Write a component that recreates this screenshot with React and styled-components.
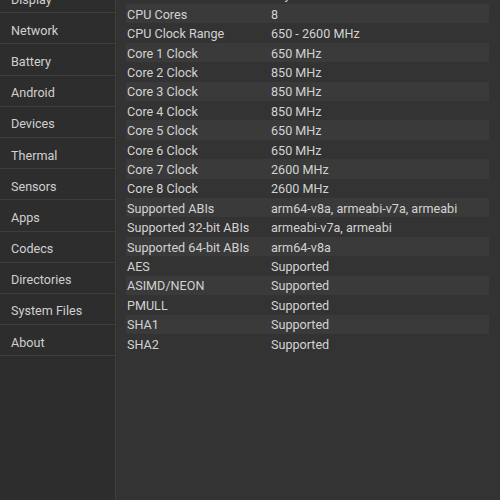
import React from "react";
import styled, { createGlobalStyle } from "styled-components";

const GlobalStyle = createGlobalStyle`
  html, body {
    margin: 0;
    padding: 0;
    background: #333333;
  }
  body {
    font-family: Roboto, "Noto Sans", sans-serif;
  }
`;

const menu = [
  "Display",
  "Network",
  "Battery",
  "Android",
  "Devices",
  "Thermal",
  "Sensors",
  "Apps",
  "Codecs",
  "Directories",
  "System Files",
  "About",
];

const rows = [
  ["Model", "Exynos 990"],
  ["CPU Cores", "8"],
  ["CPU Clock Range", "650 - 2600 MHz"],
  ["Core 1 Clock", "650 MHz"],
  ["Core 2 Clock", "850 MHz"],
  ["Core 3 Clock", "850 MHz"],
  ["Core 4 Clock", "850 MHz"],
  ["Core 5 Clock", "650 MHz"],
  ["Core 6 Clock", "650 MHz"],
  ["Core 7 Clock", "2600 MHz"],
  ["Core 8 Clock", "2600 MHz"],
  ["Supported ABIs", "arm64-v8a, armeabi-v7a, armeabi"],
  ["Supported 32-bit ABIs", "armeabi-v7a, armeabi"],
  ["Supported 64-bit ABIs", "arm64-v8a"],
  ["AES", "Supported"],
  ["ASIMD/NEON", "Supported"],
  ["PMULL", "Supported"],
  ["SHA1", "Supported"],
  ["SHA2", "Supported"],
];

const App = () => {
  return (
    <>
      <GlobalStyle />
      <Screen>
        <Sidebar>
          <Menu>
            {menu.map((m) => (
              <MenuItem key={m}>{m}</MenuItem>
            ))}
          </Menu>
        </Sidebar>
        <Content>
          <Table>
            {rows.map(([k, v], i) => (
              <Row key={k} $striped={i % 2 === 1}>
                <Label>{k}</Label>
                <Value>{v}</Value>
              </Row>
            ))}
          </Table>
        </Content>
      </Screen>
    </>
  );
};
export default App;

const Screen = styled.div`
  width: 500px;
  height: 500px;
  display: flex;
  overflow: hidden;
  background: #333333;
  color: #d2d2d2;
  font-size: 12.6px;
`;

const Sidebar = styled.div`
  width: 115px;
  flex-shrink: 0;
  background: #2d2d2d;
  border-right: 1px solid #3e3e3e;
  overflow: hidden;
`;

const Menu = styled.div`
  margin-top: -18px;
  display: flex;
  flex-direction: column;
`;

const MenuItem = styled.div`
  box-sizing: border-box;
  height: 31.2px;
  display: flex;
  align-items: center;
  padding-left: 11px;
  padding-top: 4px;
  border-bottom: 1px solid #3d3d3d;
  color: #d0d0d0;
`;

const Content = styled.div`
  flex: 1;
  overflow: hidden;
  padding-left: 10px;
  padding-right: 11px;
`;

const Table = styled.div`
  margin-top: -15.4px;
  display: flex;
  flex-direction: column;
`;

const Row = styled.div`
  box-sizing: border-box;
  height: 19.41px;
  padding-top: 1px;
  display: grid;
  grid-template-columns: 145px 1fr;
  align-items: center;
  background: ${(p) => (p.$striped ? "#3a3a3a" : "transparent")};
`;

const Label = styled.span`
  padding-left: 1px;
  white-space: nowrap;
`;

const Value = styled.span`
  white-space: nowrap;
`;
